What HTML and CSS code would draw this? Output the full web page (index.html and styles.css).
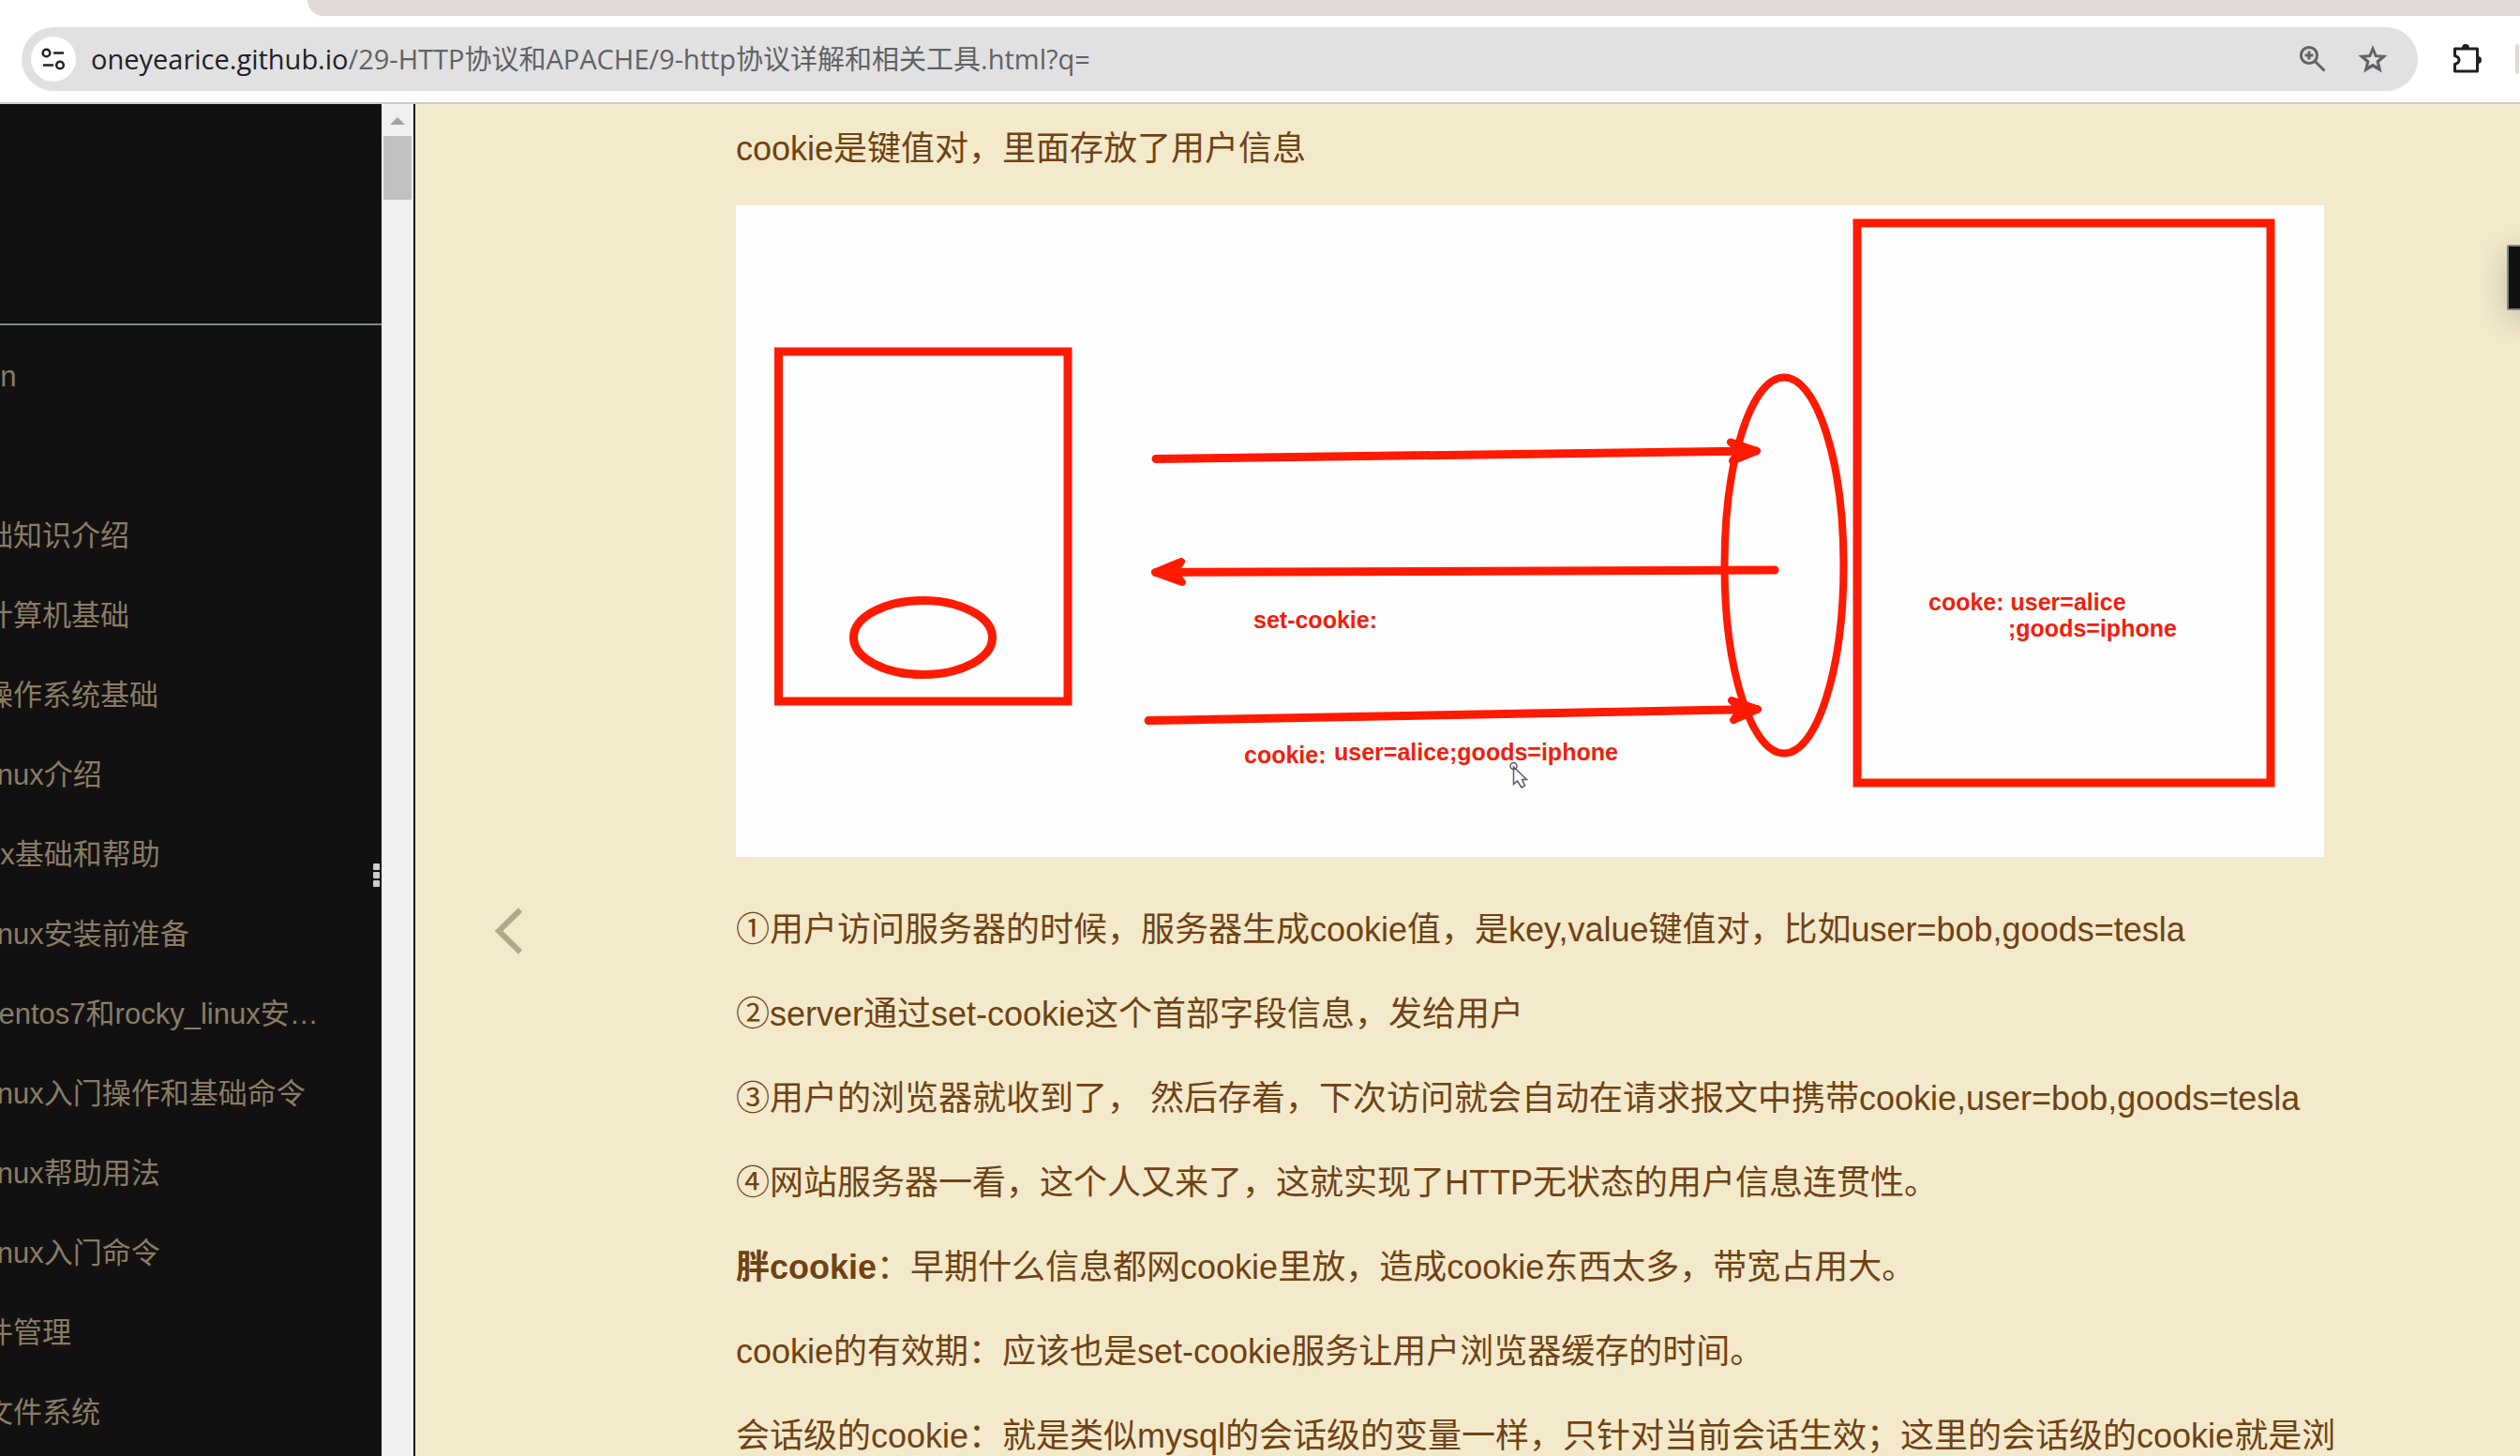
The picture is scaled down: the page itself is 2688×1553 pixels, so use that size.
FILE: index.html
```html
<!DOCTYPE html>
<html lang="zh-CN">
<head>
<meta charset="utf-8">
<meta name="viewport" content="width=device-width, initial-scale=1">
<title>9-http协议详解和相关工具</title>
<link rel="stylesheet" href="styles.css">
</head>
<body>
<header class="browser">
  <div class="tab-strip"></div>
  <div class="toolbar">
    <div class="omnibox">
      <button class="site-info" type="button" aria-label="查看网站信息">
        <svg width="28" height="28" viewBox="0 0 28 28" fill="none" stroke="#1f2125" stroke-width="2.500">
          <circle cx="6.500" cy="7.500" r="3.800"/><path d="M14 7.500h11"/>
          <circle cx="21" cy="20.500" r="3.800"/><path d="M3 20.500h11"/>
        </svg>
      </button>
      <div class="url"><span class="url-host">oneyearice.github.io</span>/29-HTTP协议和APACHE/9-http协议详解和相关工具.html?q=</div>
      <button class="icon-button" type="button" aria-label="缩放">
        <svg width="32" height="32" viewBox="0 0 32 32" fill="none" stroke="#606367" stroke-width="3">
          <circle cx="12" cy="12" r="8.600"/><path d="M18 18l10.500 10.500M12 7.500v9M7.500 12h9"/>
        </svg>
      </button>
      <button class="icon-button" type="button" aria-label="收藏">
        <svg width="32" height="32" viewBox="0 0 32 32">
          <path fill="#606367" fill-rule="evenodd" d="M16 1l4.200 10.200 11.300.9-8.500 7.300 2.700 11.100L16 24.700 6.300 30.500 9 19.400.5 12.100l11.300-.9zM16 8.700l-2.200 5.200-5.500.5 4.200 3.600-1.300 5.500L16 20.700l4.800 2.800-1.300-5.500 4.200-3.600-5.500-.5z"/>
        </svg>
      </button>
    </div>
    <button class="icon-button" type="button" aria-label="扩展程序">
      <svg width="34" height="34" viewBox="0 0 34 34">
        <path d="M4.500 6h24v24h-24v-7.500c3-.8 4.500-2.300 4.500-4.500s-1.500-3.700-4.500-4.500z" fill="none" stroke="#1f2125" stroke-width="3" stroke-linejoin="round"/>
        <path d="M12 5a4 4 0 0 1 8 0zM29 14a4 4 0 0 1 0 8z" fill="#1f2125"/>
      </svg>
    </button>
    <span class="divider"></span>
  </div>
</header>

<div class="book">
  <nav class="summary" aria-label="目录">
    <div class="summary-head"></div>
    <ul class="chapters">
      <li><a href="#">on</a></li>
      <li></li>
      <li><a href="#">础知识介绍</a></li>
      <li><a href="#">计算机基础</a></li>
      <li><a href="#">操作系统基础</a></li>
      <li><a href="#">linux介绍</a></li>
      <li><a href="#">ux基础和帮助</a></li>
      <li><a href="#">linux安装前准备</a></li>
      <li><a href="#">centos7和rocky_linux安…</a></li>
      <li><a href="#">linux入门操作和基础命令</a></li>
      <li><a href="#">linux帮助用法</a></li>
      <li><a href="#">linux入门命令</a></li>
      <li><a href="#">件管理</a></li>
      <li><a href="#">文件系统</a></li>
    </ul>
    <div class="resize-handle"><i></i><i></i><i></i></div>
  </nav>
  <div class="scrollbar">
    <span class="scroll-up"></span>
    <span class="scroll-thumb"></span>
  </div>

  <main class="page">
    <div class="page-nav">
      <a class="prev" href="#" aria-label="上一章">
        <svg width="32" height="52" viewBox="0 0 32 52" fill="none" stroke="#b1a78d" stroke-width="6">
          <path d="M28 3.500L5 26l23 22.500"/>
        </svg>
      </a>
    </div>
    <article class="content">
      <p>cookie是键值对，里面存放了用户信息</p>
      <figure class="diagram">
        <svg viewBox="0 0 1694 695" role="img" aria-label="cookie 交互示意图">
          <g fill="none" stroke="#ff1a00" stroke-width="9" stroke-linecap="round">
            <rect x="45.500" y="156" width="308.500" height="373"/>
            <ellipse cx="199.500" cy="461" rx="74" ry="39.500"/>
            <rect x="1196" y="19" width="441" height="597"/>
            <ellipse cx="1118" cy="384" rx="63.500" ry="200.500" stroke-width="8"/>
            <path d="M448 270.500L1088 262"/>
            <path d="M448 391.500L1108 389"/>
            <path d="M440 549.500L1089 537.500"/>
          </g>
          <g fill="#ff1a00" stroke="#ff1a00" stroke-width="8" stroke-linecap="round" stroke-linejoin="round">
            <path d="M1061 252.500L1089 262l-26 10.500 8-10.500z"/>
            <path d="M475 380l-28 11.500 29 10.500-9-10.500z"/>
            <path d="M1062 528l28 9.500-26 11.500 8-11.500z"/>
          </g>
          <g class="diagram-text">
            <text x="552" y="451">set-cookie:</text>
            <text x="542" y="595">cookie:</text>
            <text x="638" y="592">user=alice;goods=iphone</text>
            <text x="1272" y="432">cooke: user=alice</text>
            <text x="1357" y="460">;goods=iphone</text>
          </g>
          <g fill="#fff" stroke="#555a66" stroke-width="1.500">
            <path d="M829.500 599v18.500l4-3.500 4.500 7 3.500-2-3-6.500h5z"/>
            <circle cx="829.500" cy="598" r="3.500" fill="none"/>
          </g>
        </svg>
      </figure>
      <p>①用户访问服务器的时候，服务器生成cookie值，是key,value键值对，比如user=bob,goods=tesla</p>
      <p>②server通过set-cookie这个首部字段信息，发给用户</p>
      <p>③用户的浏览器就收到了， 然后存着，下次访问就会自动在请求报文中携带cookie,user=bob,goods=tesla</p>
      <p>④网站服务器一看，这个人又来了，这就实现了HTTP无状态的用户信息连贯性。</p>
      <p><strong>胖cookie</strong>：早期什么信息都网cookie里放，造成cookie东西太多，带宽占用大。</p>
      <p>cookie的有效期：应该也是set-cookie服务让用户浏览器缓存的时间。</p>
      <p>会话级的cookie：就是类似mysql的会话级的变量一样，只针对当前会话生效；这里的会话级的cookie就是浏</p>
    </article>
    <div class="side-panel"></div>
  </main>
</div>
</body>
</html>
```
FILE: styles.css
```css
* {
  box-sizing: border-box;
}

body {
  display: flex;
  flex-direction: column;
  height: 100vh;
  margin: 0;
  overflow: hidden;
  font-family: "Liberation Sans", "Noto Sans CJK SC", sans-serif;
}

button {
  padding: 0;
  border: 0;
  background: none;
}

svg {
  display: block;
}

/* Browser chrome */
.browser {
  flex: none;
  border-bottom: 2px solid #c9cccf;
  background: #fff;
}

.tab-strip {
  height: 17px;
  margin-left: 328px;
  border-bottom-left-radius: 20px;
  background: #e3dad7;
}

.toolbar {
  display: flex;
  align-items: center;
  gap: 35px;
  padding: 12px 1px 12px 23px;
}

.omnibox {
  display: flex;
  flex: 1;
  align-items: center;
  gap: 32px;
  height: 68px;
  padding: 0 32px 0 10px;
  border-radius: 34px;
  background: #e1e1e1;
}

.site-info {
  display: grid;
  place-items: center;
  width: 48px;
  height: 48px;
  margin-right: -16px;
  border-radius: 50%;
  background: #fff;
}

.url {
  flex: 1;
  overflow: hidden;
  color: #5f6266;
  font-family: "Open Sans", "Noto Sans CJK SC", sans-serif;
  font-size: 29px;
  line-height: 40px;
  white-space: nowrap;
}

.url-host {
  color: #1f2125;
}

.divider {
  width: 4px;
  height: 32px;
  border-radius: 2px;
  background: #e3dad7;
}

/* Book layout */
.book {
  display: flex;
  flex: 1;
  min-height: 0;
}

.summary {
  position: relative;
  flex: none;
  width: 407px;
  overflow: hidden;
  background: #111;
}

.summary-head {
  height: 236px;
  border-bottom: 2px solid #7e888b;
}

.chapters {
  margin: 12px 0 0 -17px;
  padding: 0;
  list-style: none;
}

.chapters li {
  height: 85px;
  font-size: 31px;
  line-height: 85px;
  white-space: nowrap;
}

.chapters a {
  color: #8a7c64;
  text-decoration: none;
}

.resize-handle {
  position: absolute;
  top: 810px;
  right: 2px;
  display: grid;
  gap: 2px;
}

.resize-handle i {
  width: 7px;
  height: 7px;
  border-radius: 1px;
  background: #ccc;
}

.scrollbar {
  display: flex;
  flex: none;
  flex-direction: column;
  align-items: center;
  gap: 12px;
  width: 36px;
  padding-top: 14px;
  border-right: 2px solid #111;
  background: #f0f0f0;
}

.scroll-up {
  width: 16px;
  height: 8px;
  background: #a3a3a3;
  clip-path: polygon(50% 0, 100% 100%, 0 100%);
}

.scroll-thumb {
  width: 30px;
  height: 68px;
  background: #c1c1c1;
}

/* Reading area */
.page {
  position: relative;
  display: flex;
  flex: 1;
  min-width: 0;
  overflow: hidden;
  background: #f3eacb;
}

.page-nav {
  flex: none;
  width: 342px;
  padding: 856px 0 0 84px;
}

.prev {
  display: block;
  width: 32px;
}

.content {
  flex: 1;
  min-width: 0;
  margin-right: 209px;
  padding-top: 18px;
  color: #704214;
  font-size: 36px;
  line-height: 60px;
}

.content p {
  margin: 0 0 30px;
  white-space: nowrap;
}

.diagram {
  margin: 0 0 48px;
  background: #fefefe;
}

.diagram-text {
  fill: #f0200c;
  font-size: 25px;
  font-weight: bold;
}

.side-panel {
  position: absolute;
  top: 150px;
  right: -58px;
  width: 72px;
  height: 70px;
  border: 2px solid #7e888b;
  border-radius: 2px;
  background: #111;
  box-shadow: 0 8px 32px rgba(0, 0, 0, 0.2);
}
```
